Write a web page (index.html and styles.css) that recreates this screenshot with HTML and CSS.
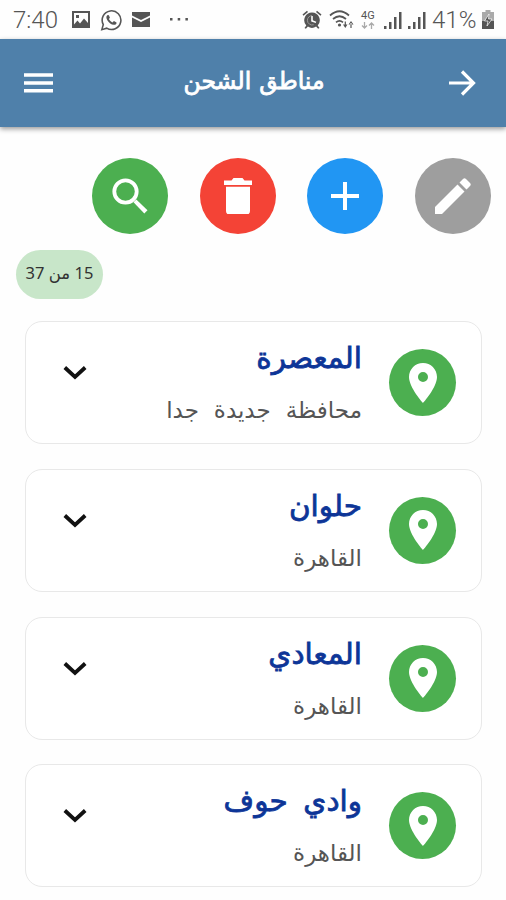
FILE: index.html
```
<!DOCTYPE html>
<html lang="ar">
<head>
    <meta charset="UTF-8">
    <title>مناطق الشحن</title>
    <link rel="stylesheet" href="styles.css">
</head>
<body>
    <svg class="defs">
        <symbol id="pin" viewBox="0 0 24 24">
            <path fill-rule="evenodd" d="M12 2C8.1 2 5 5.1 5 9c0 5.200 7 13 7 13s7-7.800 7-13c0-3.900-3.100-7-7-7zm0 9.500a2.500 2.500 0 1 1 0-5 2.500 2.500 0 0 1 0 5z"/>
        </symbol>
        <symbol id="down" viewBox="0 0 24 16">
            <path d="M1.800 2.500 12 12 22.200 2.500" fill="none" stroke="currentColor" stroke-width="3.800"/>
        </symbol>
        <symbol id="signal" viewBox="0 0 18 18">
            <path d="M0 15h2.500v3H0zM5 11h2.500v7H5zM10 6h2.500v12H10zM15 1h2.500v17H15z"/>
        </symbol>
    </svg>
    <div class="status">
        <span class="time">7:40</span>
        <svg class="s-img" viewBox="0 0 18 17"><path fill-rule="evenodd" d="M0 0h18v17H0zM2 2v11.500l3.500-4 2.500 3 4-5 4 4.500V2zM4 4h3v3H4z"/></svg>
        <svg class="s-wa" viewBox="0 0 24 24"><path d="M2 22.500 3.600 17A10.200 10.200 0 1 1 7.300 20.900z" fill="none" stroke="currentColor" stroke-width="1.700"/><path d="M8.300 6.500c-1.700 1-1.800 3.200-.3 5.700 1.700 2.900 4.400 5 7 5.100 2 .1 3.300-1.300 3-2.700l-2.800-1.500-1.700 1.600c-1.500-.6-3-2.100-3.800-3.700l1.100-1.400-1.100-2.800z"/></svg>
        <svg class="s-mail" viewBox="0 0 18 15"><path d="M0 0h18v3.500L9 8 0 3.500zM0 5.500 9 10l9-4.500V15H0z"/></svg>
        <svg class="s-dots" viewBox="0 0 18 3"><path d="M0 0h2.500v2.500H0zM7.700 0h2.500v2.500H7.700zM15.400 0h2.500v2.500h-2.500z"/></svg>
        <span class="space"></span>
        <svg class="s-alarm" viewBox="0 0 20 19"><path fill-rule="evenodd" d="M10 2.500a7.700 7.700 0 0 1 5.700 12.900L17.500 18l-1.400.8-2-2.200a7.700 7.700 0 0 1-8.200 0l-2 2.200-1.400-.8 1.800-2.600A7.700 7.700 0 0 1 10 2.500zM9.200 6v5.500l4.500 1.600.6-1.400-3.500-1.400V6zM.5 4.500 5 .8l1 1.200-4.500 3.700zM15 .8l4.500 3.700-1 1.200L14 2z"/><path d="M10 5.600a4.700 4.700 0 0 0-4.600 4.700 4.700 4.700 0 0 0 6.300 4.400" fill="none" stroke="#aaa" stroke-width=".8"/></svg>
        <svg class="s-wifi" viewBox="0 0 25 19"><path d="M1 5.500Q10.500-3 20 5.500M4 9q6.500-5.500 13 0M7 12.300q3.500-3 7 0" fill="none" stroke="currentColor" stroke-width="1.700"/><circle cx="10.500" cy="15" r="1.600"/><path d="M14 14.500h4.500l-2.200 3.500zM19.500 14.500h5L22 11zM15.700 11.500h1.200v4h-1.200zM21.400 13h1.200v5h-1.200z"/></svg>
        <span class="net">4G<svg viewBox="0 0 14 7"><path d="M3.500 0v6M1 3.500l2.500 2.500L6 3.500M10.500 7V1M8 3.500 10.500 1 13 3.500" fill="none" stroke="#aaa" stroke-width="1.300"/></svg></span>
        <svg class="s-sig"><use href="#signal"/></svg>
        <svg class="s-sig"><use href="#signal"/></svg>
        <span class="pct">41%</span>
        <svg class="s-bat" viewBox="0 0 12 19"><path d="M3.500 0h5v2H12v9H0V2h3.500z" fill="#aaa"/><path d="M0 11h12v8H0z"/><path d="M7 4 2.500 11H6l-1 5 5-7H6.500z" fill="#555" stroke="#fff" stroke-width=".7"/></svg>
    </div>
    <header class="bar">
        <svg class="menu" viewBox="0 0 30 22"><path d="M0 1h30v3.500H0zM0 9.200h30v3.500H0zM0 17.300h30v3.500H0z"/></svg>
        <h1 dir="rtl">مناطق الشحن</h1>
        <svg class="arrow" viewBox="0 0 28 28"><path d="M1 14h24M14 2.500 25.500 14 14 25.500" fill="none" stroke="currentColor" stroke-width="3.200"/></svg>
    </header>
    <div class="actions">
        <button class="btn green"><svg viewBox="0 0 36 36"><circle cx="13.500" cy="13.500" r="11.200" fill="none" stroke="currentColor" stroke-width="3.800"/><path d="m21.500 24.300 2.800-2.800L35.500 32.300 32.300 35.500z"/></svg></button>
        <button class="btn red"><svg viewBox="0 0 36 36"><path d="M4 2.500h7.500L13.500 0h9l2 2.500H32V7H4zM6 8.800h24V33q0 3.500-3.500 3.500h-17Q6 36.500 6 33z"/></svg></button>
        <button class="btn blue"><svg viewBox="0 0 36 36"><path d="M16 4h4v12h12v4H20v12h-4V20H4v-4h12z"/></svg></button>
        <button class="btn gray"><svg viewBox="0 0 36 36"><path d="M0 29 22.500 6.500l7 7L7 36H0zM24.500 4.500 28 1q1.500-1.500 3 0l4 4q1.500 1.500 0 3l-3.500 3.500z"/></svg></button>
    </div>
    <div class="count" dir="rtl">15 من 37</div>
    <ul class="list" dir="rtl">
        <li>
            <div class="icon"><svg><use href="#pin"/></svg></div>
            <div class="des">
                <h2>المعصرة</h2>
                <p>محافظة جديدة جدا</p>
            </div>
            <svg class="more"><use href="#down"/></svg>
        </li>
        <li>
            <div class="icon"><svg><use href="#pin"/></svg></div>
            <div class="des">
                <h2>حلوان</h2>
                <p>القاهرة</p>
            </div>
            <svg class="more"><use href="#down"/></svg>
        </li>
        <li>
            <div class="icon"><svg><use href="#pin"/></svg></div>
            <div class="des">
                <h2>المعادي</h2>
                <p>القاهرة</p>
            </div>
            <svg class="more"><use href="#down"/></svg>
        </li>
        <li>
            <div class="icon"><svg><use href="#pin"/></svg></div>
            <div class="des">
                <h2>وادي حوف</h2>
                <p>القاهرة</p>
            </div>
            <svg class="more"><use href="#down"/></svg>
        </li>
    </ul>
</body>
</html>
```
FILE: styles.css
```
*{
    box-sizing:border-box;
}
body{
    margin:0;
    height:900px;
    overflow:hidden;
    background:#fefefe;
    font-family:"Noto Sans", "DejaVu Sans", sans-serif;
}
svg{
    display:block;
    flex:none;
    fill:currentColor;
}
.defs{
    display:none;
}
/* 状态栏 */
.status{
    display:flex;
    align-items:center;
    height:39px;
    padding:0 12px 0 13px;
    color:#555;
    font-family:Roboto, sans-serif;
}
.time,
.pct{
    font-size:24px;
    font-weight:300;
    line-height:41px;
}
.time{
    width:47px;
    padding-top:2px;
}
.pct{
    width:44px;
    margin-left:6px;
    padding-top:2px;
}
.s-img{
    width:18px;
    height:17px;
    margin-left:12px;
}
.s-wa{
    width:22px;
    height:22px;
    margin-left:10px;
}
.s-mail{
    width:18px;
    height:15px;
    margin-left:10px;
}
.s-dots{
    width:18px;
    height:3px;
    margin-left:20px;
}
.space{
    flex:1;
}
.s-alarm{
    width:20px;
    height:19px;
}
.s-wifi{
    width:25px;
    height:19px;
    margin-left:7px;
}
.net{
    width:15px;
    margin-left:7px;
    font-size:11px;
    line-height:10px;
}
.net svg{
    width:14px;
    height:7px;
    margin-top:1px;
}
.s-sig{
    width:18px;
    height:18px;
    margin-left:8px;
}
.s-sig + .s-sig{
    margin-left:6px;
}
.s-bat{
    width:12px;
    height:19px;
    margin-left:6px;
}
/* 标题栏 */
.bar{
    display:flex;
    align-items:center;
    justify-content:space-between;
    height:88px;
    padding:0 30px 0 24px;
    background:#4f80aa;
    color:#fff;
    box-shadow:0 2px 5px rgba(0, 0, 0, 0.4);
}
.bar h1{
    margin:0 0 6px 7px;
    font-size:23.500px;
    font-weight:normal;
    line-height:40px;
    word-spacing:2px;
    -webkit-text-stroke:0.8px #fff;
}
.menu{
    width:29px;
    height:22px;
}
.arrow{
    width:28px;
    height:28px;
}
.actions{
    display:flex;
    justify-content:flex-end;
    gap:31.600px;
    padding:31px 15px 0;
}
.btn{
    display:flex;
    align-items:center;
    justify-content:center;
    width:76px;
    height:76px;
    padding:0;
    border:0;
    border-radius:50%;
    color:#fff;
}
.btn svg{
    width:36px;
    height:36px;
}
.green{
    background:#4caf50;
}
.red{
    background:#f44336;
}
.blue{
    background:#2196f3;
}
.gray{
    background:#9e9e9e;
}
.count{
    width:87px;
    height:49px;
    margin:16px 0 22px 16px;
    border-radius:25px;
    background:#c8e6c9;
    color:#333;
    font-size:16.500px;
    line-height:46px;
    text-align:center;
}
.list{
    margin:0;
    padding:0 24px 0 25px;
    list-style:none;
}
.list li{
    display:flex;
    height:123px;
    margin-bottom:24.800px;
    padding:0 25px 0 37px;
    border:1px solid #e8e8e8;
    border-radius:17px;
    background:#fff;
}
.icon{
    display:flex;
    align-items:center;
    justify-content:center;
    width:67px;
    height:67px;
    margin-top:27px;
    border-radius:50%;
    background:#4caf50;
    color:#fff;
}
.icon svg{
    width:48px;
    height:48px;
}
.des{
    flex:1;
    padding:13px 27px 0 0;
}
.des h2{
    margin:0;
    color:#0d3597;
    font-size:29.500px;
    font-weight:normal;
    line-height:44px;
    word-spacing:8px;
    -webkit-text-stroke:0.8px #0d3597;
}
.des p{
    margin:10px 0 0;
    color:#555;
    font-size:23px;
    line-height:40px;
    word-spacing:9px;
}
.more{
    width:24px;
    height:16px;
    margin-top:43px;
    color:#111;
}
```
